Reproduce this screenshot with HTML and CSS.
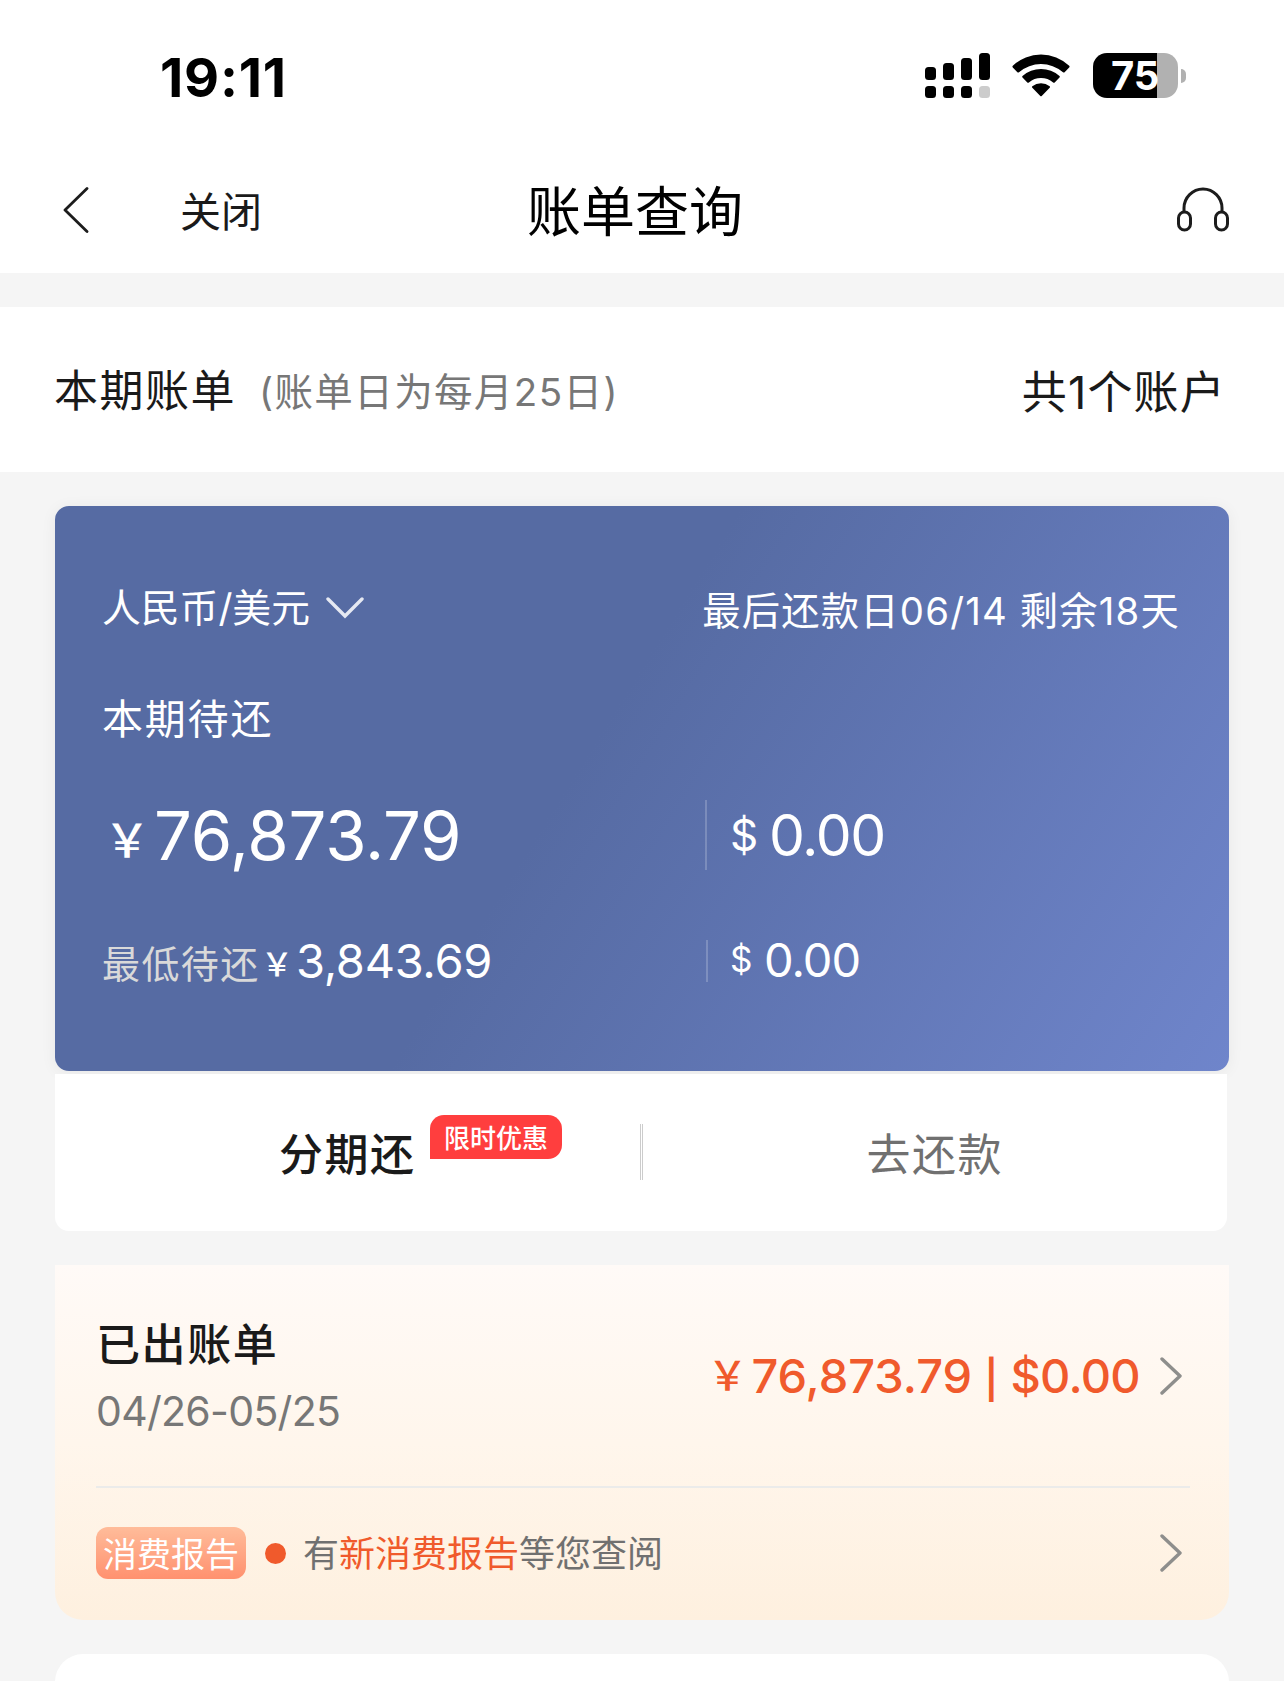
FILE: index.html
```html
<!DOCTYPE html>
<html lang="zh-CN">
<head>
    <meta charset="UTF-8">
    <meta name="viewport" content="width=device-width, initial-scale=1.0">
    <title>账单查询</title>
    <link rel="stylesheet" href="styles.css">
</head>
<body>

<header class="header">
    <div class="status-bar">
        <span class="time">19:11</span>
        <div class="status-icons">
            <svg class="signal" width="65" height="45" viewBox="0 0 65 45">
                <rect x="0" y="14" width="11" height="13" rx="3.5"/>
                <rect x="18" y="10" width="11" height="17" rx="3.5"/>
                <rect x="36" y="5" width="11" height="22" rx="3.5"/>
                <rect x="54" y="0" width="11" height="27" rx="3.5"/>
                <rect x="0" y="33" width="11" height="12" rx="3.5"/>
                <rect x="18" y="33" width="11" height="12" rx="3.5"/>
                <rect x="36" y="33" width="11" height="12" rx="3.5"/>
                <rect x="54" y="33" width="11" height="12" rx="3.5" fill="#ccc"/>
            </svg>
            <svg class="wifi" width="58" height="43" viewBox="0 0 58 43">
                <path d="M0.8 13.400 Q0 12.600 0.8 11.800 A41 41 0 0 1 57.2 11.800 Q58 12.600 57.2 13.400 L52.600 18.200 Q51.800 19 51 18.200 A34 34 0 0 0 7 18.200 Q6.200 19 5.400 18.200 Z"/>
                <path d="M10.500 23.600 Q9.700 22.800 10.500 22 A28 28 0 0 1 47.500 22 Q48.300 22.800 47.500 23.600 L42.700 28.400 Q41.900 29.200 41.100 28.400 A19 19 0 0 0 16.900 28.400 Q16.100 29.200 15.300 28.400 Z"/>
                <path d="M20.300 33.800 Q19.500 33 20.300 32.200 A14 14 0 0 1 37.700 32.200 Q38.500 33 37.700 33.800 L29.700 41.900 Q29 42.600 28.300 41.900 Z"/>
            </svg>
            <div class="battery">
                <div class="battery-body">75</div>
                <div class="battery-tip"></div>
            </div>
        </div>
    </div>
    <div class="nav">
        <svg class="back" width="26" height="46" viewBox="0 0 26 46">
            <path d="M24 1.500 L2 23 L24 44.500" fill="none" stroke="#1c1c1c" stroke-width="2.800" stroke-linecap="round" stroke-linejoin="round"/>
        </svg>
        <span class="close">关闭</span>
        <h1 class="title">账单查询</h1>
        <svg class="service" width="52" height="46" viewBox="0 0 52 46">
            <g fill="none" stroke="#1c1c1c" stroke-width="3">
                <path d="M7 25 V21 A19 19 0 0 1 45 21 V25"/>
                <rect x="1.500" y="25" width="12" height="18" rx="6"/>
                <rect x="38.500" y="25" width="12" height="18" rx="6"/>
            </g>
        </svg>
    </div>
</header>

<section class="period">
    <h2 class="period-title">本期账单</h2>
    <span class="period-day">(账单日为每月25日)</span>
    <span class="period-count">共1个账户</span>
</section>

<main class="main">
    <section class="card">
        <div class="card-top">
            <span class="currency">人民币/美元</span>
            <svg class="arrow-down" width="38" height="22" viewBox="0 0 38 22">
                <path d="M2 2 L19 19 L36 2" fill="none" stroke="#e6e9f2" stroke-width="3.400" stroke-linecap="round"/>
            </svg>
            <span class="due">最后还款日06/14 剩余18天</span>
        </div>
        <div class="card-label">本期待还</div>
        <div class="amounts amounts-total">
            <div class="rmb"><span class="sign">￥</span><span class="num">76,873.79</span></div>
            <div class="usd"><span class="sign">$</span><span class="num">0.00</span></div>
        </div>
        <div class="amounts amounts-min">
            <div class="rmb"><span class="min-label">最低待还</span><span class="sign">￥</span><span class="num">3,843.69</span></div>
            <div class="usd"><span class="sign">$</span><span class="num">0.00</span></div>
        </div>
    </section>

    <section class="actions">
        <div class="action installment">
            <span class="action-text">分期还<i class="tag">限时优惠</i></span>
        </div>
        <div class="action-line"></div>
        <div class="action repay">去还款</div>
    </section>

    <section class="bill">
        <div class="bill-row">
            <div class="bill-info">
                <h3 class="bill-title">已出账单</h3>
                <p class="bill-date">04/26-05/25</p>
            </div>
            <div class="bill-amount"><span class="bill-yen">￥</span><span class="bill-rmb">76,873.79</span><span class="bill-sep">|</span><span class="bill-usd">$0.00</span></div>
            <svg class="arrow-right" width="22" height="38" viewBox="0 0 22 38">
                <path d="M2 2 L20 19 L2 36" fill="none" stroke="#8e8e8c" stroke-width="3.400" stroke-linecap="round" stroke-linejoin="round"/>
            </svg>
        </div>
        <div class="report-row">
            <span class="report-tag">消费报告</span>
            <span class="dot"></span>
            <span class="report-text">有<em>新消费报告</em>等您查阅</span>
            <svg class="arrow-right" width="22" height="38" viewBox="0 0 22 38">
                <path d="M2 2 L20 19 L2 36" fill="none" stroke="#8e8e8c" stroke-width="3.400" stroke-linecap="round" stroke-linejoin="round"/>
            </svg>
        </div>
    </section>

    <section class="next"></section>
</main>

</body>
</html>
```
FILE: styles.css
```css
* {
    box-sizing: border-box;
    margin: 0;
    padding: 0;
}
body {
    font-family: Inter, "Noto Sans CJK SC", sans-serif;
    background-color: #f5f5f5;
    color: #1a1a1a;
    width: 1284px;
    height: 1681px;
    overflow: hidden;
}
span, h1, h2, h3, p {
    white-space: nowrap;
}

/* header */
.header {
    height: 273px;
    background-color: #fff;
}
.status-bar {
    display: flex;
    justify-content: space-between;
    align-items: flex-start;
    height: 147px;
    padding: 53px 98px 0 160px;
    color: #000;
}
.time {
    font-size: 54px;
    font-weight: 650;
    line-height: 49px;
    letter-spacing: 0.8px;
}
.status-icons {
    display: flex;
}
.wifi {
    margin: 1px 0 0 22px;
}
.battery {
    display: flex;
    align-items: center;
    gap: 3px;
    margin-left: 23px;
}
.battery-body {
    width: 85px;
    height: 45px;
    padding-left: 18px;
    border-radius: 14px;
    background: linear-gradient(to right, #000 64px, #b1b1b1 64px);
    color: #fff;
    font-size: 40px;
    font-weight: 700;
    line-height: 45px;
}
.battery-tip {
    width: 5px;
    height: 14px;
    border-radius: 0 7px 7px 0;
    background-color: #b1b1b1;
}
.nav {
    display: flex;
    align-items: center;
    height: 126px;
    padding: 0 55px 0 63px;
}
.close {
    width: 347px;
    margin-left: 91px;
    padding-top: 3px;
    font-size: 41px;
    line-height: 60px;
}
.title {
    padding-top: 5px;
    font-size: 54px;
    font-weight: 400;
    line-height: 80px;
    color: #000;
}
.service {
    margin-left: auto;
}

/* current period */
.period {
    display: flex;
    align-items: center;
    height: 165px;
    margin-top: 34px;
    padding: 0 58px 3px 54px;
    background-color: #fff;
}
.period-title {
    font-size: 44px;
    font-weight: 400;
    letter-spacing: 1.5px;
}
.period-day {
    margin-left: 23px;
    padding-top: 1px;
    color: #777;
    font-size: 38.5px;
    letter-spacing: 1.4px;
}
.period-count {
    margin-left: auto;
    padding-top: 2px;
    font-size: 45px;
    letter-spacing: 1.2px;
}

.main {
    padding: 34px 55px 0;
}

/* blue card */
.card {
    height: 565px;
    padding: 74px 49px 0 47px;
    border-radius: 14px;
    background: linear-gradient(122deg, #566ba3 45%, #6f85cb 100%);
    box-shadow: 0 2px 16px rgba(0, 0, 0, 0.06);
    color: #fff;
}
.card-top {
    display: flex;
    align-items: center;
    height: 56px;
}
.currency {
    width: 209px;
    padding-bottom: 6px;
    font-size: 38.800px;
}
.arrow-down {
    margin-left: 15px;
}
.due {
    margin-left: auto;
    font-size: 38.300px;
    letter-spacing: 1.2px;
}
.card-label {
    height: 60px;
    margin-top: 53px;
    font-size: 41px;
    line-height: 60px;
    letter-spacing: 1.8px;
}
.amounts {
    display: flex;
    align-items: center;
}
.amounts-total {
    height: 70px;
    margin-top: 51px;
}
.amounts-min {
    height: 42px;
    margin-top: 70px;
}
.rmb {
    display: flex;
    align-items: baseline;
    width: 603px;
}
.usd {
    display: flex;
    flex: 1;
    align-items: center;
    height: 100%;
    padding-left: 23px;
    border-left: 2px solid rgba(255, 255, 255, 0.2);
}
.rmb .sign {
    padding-bottom: 3px;
    font-family: "Noto Sans CJK SC", sans-serif;
    font-weight: 500;
    line-height: 1;
    transform: translateY(-3px);
}
.amounts-total .rmb {
    padding-left: 2px;
}
.amounts-total .rmb .sign {
    width: 50px;
    font-size: 46px;
}
.amounts-total .rmb .num {
    font-size: 67px;
    letter-spacing: -0.2px;
}
.amounts-total .usd .sign {
    width: 39px;
    font-size: 44px;
}
.amounts-total .usd .num {
    font-size: 57px;
    letter-spacing: -1.4px;
}
.amounts-min .rmb {
    width: 604px;
    margin-top: -2px;
}
.min-label {
    width: 159px;
    color: #d9d9d9;
    font-size: 38px;
    letter-spacing: 1.4px;
}
.amounts-min .rmb .sign {
    width: 35px;
    font-size: 32px;
    transform: translateY(-2px);
}
.amounts-min .num {
    font-size: 47px;
    letter-spacing: -0.3px;
}
.amounts-min .usd {
    padding: 0 0 4px 22px;
}
.amounts-min .usd .num {
    letter-spacing: -1px;
}
.amounts-min .usd .sign {
    width: 34px;
    font-size: 35px;
}

/* repay buttons */
.actions {
    display: flex;
    align-items: center;
    width: 1172px;
    height: 157px;
    margin-top: 3px;
    border-radius: 0 0 14px 14px;
    background-color: #fff;
}
.action {
    flex: 1;
    padding-bottom: 2px;
    font-size: 44px;
    letter-spacing: 1.5px;
    text-align: center;
}
.installment {
    font-weight: 500;
}
.action-text {
    position: relative;
}
.tag {
    position: absolute;
    top: -13px;
    left: 151px;
    width: 132px;
    height: 44px;
    border-radius: 14px 14px 14px 0;
    background-color: #ff3e3e;
    color: #fff;
    font-size: 26px;
    font-style: normal;
    line-height: 47px;
    letter-spacing: 0;
}
.action-line {
    width: 3px;
    height: 56px;
    margin-bottom: 1px;
    border: 1px solid #ccc;
    border-width: 0 1px;
}
.repay {
    color: #707070;
}

/* issued bill */
.bill {
    height: 355px;
    margin-top: 34px;
    padding: 0 39px 0 41px;
    border-radius: 0 0 28px 28px;
    background: linear-gradient(#fffaf7, #fff6ec 50%, #fef0df);
}
.bill-row {
    display: flex;
    align-items: center;
    height: 223px;
    padding-right: 8px;
    border-bottom: 2px solid #ebebea;
}
.bill-info {
    padding-top: 8px;
}
.bill-title {
    font-size: 44px;
    font-weight: 500;
    line-height: 64px;
    letter-spacing: 1.6px;
}
.bill-date {
    color: #777;
    font-size: 41px;
    line-height: 69px;
    letter-spacing: -0.7px;
}
.bill-amount {
    display: flex;
    align-items: baseline;
    margin-left: auto;
    color: #f05a2c;
    font-size: 47px;
    font-weight: 500;
}
.bill-yen {
    width: 44px;
    font-family: "Noto Sans CJK SC", sans-serif;
    font-size: 40px;
    line-height: 1;
    transform: translateY(-3px);
}
.bill-rmb {
    width: 233px;
}
.bill-sep {
    width: 26px;
    font-size: 38px;
    font-weight: 600;
}
.bill-usd {
    letter-spacing: -0.7px;
}
.bill-amount + .arrow-right {
    margin-left: 20px;
}
.report-row {
    display: flex;
    align-items: center;
    height: 129px;
    padding-right: 8px;
}
.report-tag {
    width: 150px;
    height: 52px;
    border-radius: 12px;
    background: linear-gradient(#ffbc9a, #ff916f);
    color: #fff;
    font-size: 34px;
    line-height: 55px;
    text-align: center;
}
.dot {
    width: 21px;
    height: 21px;
    margin: 1px 17px 0 19px;
    border-radius: 50%;
    background-color: #f05a2c;
}
.report-text {
    padding-bottom: 4px;
    color: #707070;
    font-size: 36px;
}
.report-text em {
    color: #f05a2c;
    font-style: normal;
}
.report-row .arrow-right {
    margin-left: auto;
}

.next {
    height: 60px;
    margin-top: 34px;
    border-radius: 28px 28px 0 0;
    background-color: #fff;
}
```
